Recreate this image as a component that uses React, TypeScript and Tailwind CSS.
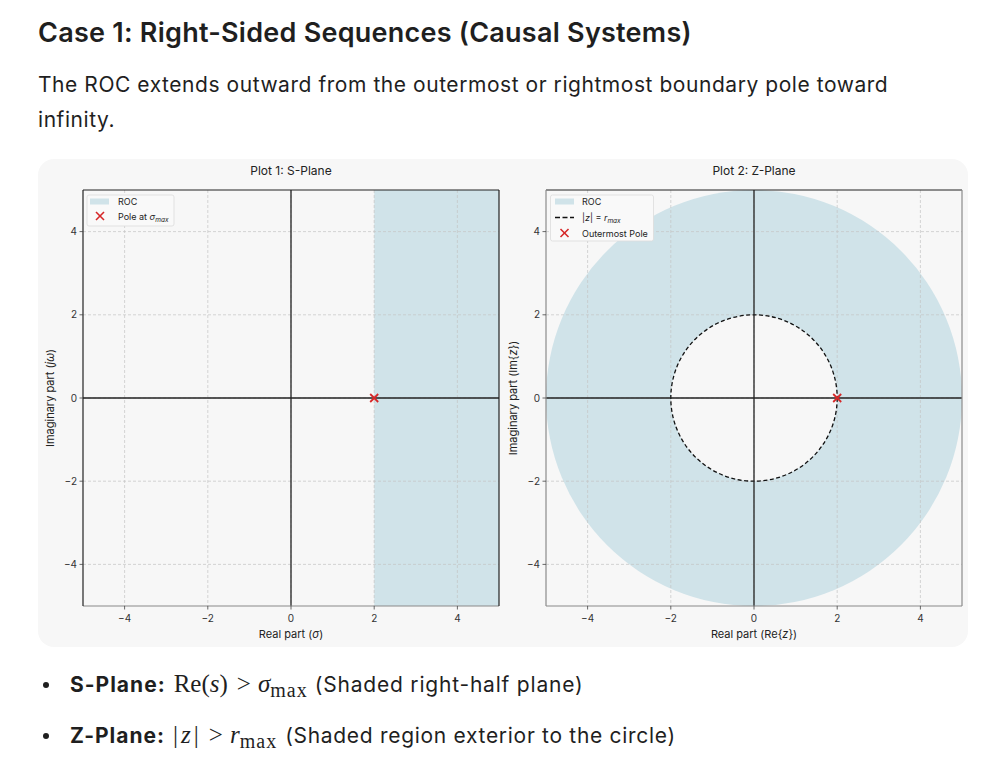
import React from "react";

const ROC = "#d0e3e9";
const FACE = "#f7f7f7";
const UNIT = 41.6;
const TICKS = [-4, -2, 0, 2, 4];

type PlotProps = {
  left: number
  title: string
  xlabel: React.ReactNode
  ylabel: React.ReactNode
  zPlane?: boolean
}

const fmt = (t: number) => (t < 0 ? "\u2212" + Math.abs(t) : String(t))

function Plot({ left, title, xlabel, ylabel, zPlane }: PlotProps) {
  const T = 31
  const W = 416
  const H = 416
  const x0 = left + W / 2
  const y0 = T + H / 2
  const px = (x: number) => x0 + x * UNIT
  const py = (y: number) => y0 - y * UNIT
  const clipId = zPlane ? "clipZ" : "clipS"

  return (
    <svg width="465" height="488" className="block shrink-0" style={{ fontFamily: "Inter, 'Liberation Sans', sans-serif" }}>
      <defs>
        <clipPath id={clipId}>
          <rect x={left} y={T} width={W} height={H} />
        </clipPath>
      </defs>

      <text x={x0} y={16} fontSize="12" textAnchor="middle" fill="#222">{title}</text>

      <g clipPath={`url(#${clipId})`}>
        <rect x={left} y={T} width={W} height={H} fill={FACE} />
        {zPlane ? (
          <>
            <circle cx={x0} cy={y0} r={5 * UNIT} fill={ROC} />
            <circle cx={x0} cy={y0} r={2 * UNIT} fill={FACE} />
          </>
        ) : (
          <rect x={px(2)} y={T} width={left + W - px(2)} height={H} fill={ROC} />
        )}
        {TICKS.map((t) => (
          <g key={t}>
            <line x1={px(t)} x2={px(t)} y1={T} y2={T + H} stroke="#c4c4c4" strokeWidth="0.7" strokeDasharray="3 2" />
            <line x1={left} x2={left + W} y1={py(t)} y2={py(t)} stroke="#c4c4c4" strokeWidth="0.7" strokeDasharray="3 2" />
          </g>
        ))}
        {zPlane && (
          <circle cx={x0} cy={y0} r={2 * UNIT} fill="none" stroke="#111" strokeWidth="1.3" strokeDasharray="4 2.5" />
        )}
        <line x1={left} x2={left + W} y1={y0} y2={y0} stroke="#222" strokeWidth="1.3" />
        <line x1={x0} x2={x0} y1={T} y2={T + H} stroke="#222" strokeWidth="1.3" />
        <g stroke="#d62728" strokeWidth="1.8">
          <line x1={px(2) - 4} x2={px(2) + 4} y1={y0 - 4} y2={y0 + 4} />
          <line x1={px(2) - 4} x2={px(2) + 4} y1={y0 + 4} y2={y0 - 4} />
        </g>
      </g>

      {/* spines */}
      <line x1={left} x2={left + W} y1={T} y2={T} stroke="#222" strokeWidth="1" />
      <line x1={left} x2={left + W} y1={T + H} y2={T + H} stroke="#8a8a8a" strokeWidth="1.2" />
      <line x1={left} x2={left} y1={T} y2={T + H} stroke={zPlane ? "#8a8a8a" : "#222"} strokeWidth="1.2" />
      <line x1={left + W} x2={left + W} y1={T} y2={T + H} stroke={zPlane ? "#8a8a8a" : "#222"} strokeWidth="1.2" />

      {/* ticks */}
      {TICKS.map((t) => (
        <g key={t} fontSize="10" fill="#333">
          <line x1={px(t)} x2={px(t)} y1={T + H} y2={T + H + 3.5} stroke="#444" strokeWidth="0.8" />
          <text x={px(t)} y={T + H + 16} textAnchor="middle">{fmt(t)}</text>
          <line x1={left - 3.5} x2={left} y1={py(t)} y2={py(t)} stroke="#444" strokeWidth="0.8" />
          <text x={left - 6} y={py(t) + 3.5} textAnchor="end">{fmt(t)}</text>
        </g>
      ))}

      <text x={x0} y={T + H + 32} fontSize="11" textAnchor="middle" fill="#222">{xlabel}</text>
      <text x={0} y={0} fontSize="11" textAnchor="middle" fill="#222" transform={`translate(${left - 29} ${y0}) rotate(-90)`}>{ylabel}</text>

      {/* legend */}
      {zPlane ? (
        <g fontSize="9" fill="#222">
          <rect x={left + 4.5} y={36} width={103} height={46} rx={2} fill="#f9f9f9" stroke="#dcdcdc" strokeWidth="0.8" />
          <rect x={left + 9} y={39.5} width={19} height={6} fill={ROC} />
          <text x={left + 36} y={46}>ROC</text>
          <line x1={left + 9} x2={left + 28} y1={58.5} y2={58.5} stroke="#111" strokeWidth="1.4" strokeDasharray="5 2.5" />
          <text x={left + 36} y={62}>|<tspan fontStyle="italic">z</tspan>| = <tspan fontStyle="italic">r</tspan><tspan fontSize="6.5" fontStyle="italic" dy="1.5">max</tspan></text>
          <g stroke="#d62728" strokeWidth="1.6">
            <line x1={left + 14.5} x2={left + 22.5} y1={70} y2={78} />
            <line x1={left + 14.5} x2={left + 22.5} y1={78} y2={70} />
          </g>
          <text x={left + 36} y={77.5}>Outermost Pole</text>
        </g>
      ) : (
        <g fontSize="9" fill="#222">
          <rect x={left + 4} y={36} width={87} height={31} rx={2} fill="#f9f9f9" stroke="#dcdcdc" strokeWidth="0.8" />
          <rect x={left + 7} y={39.5} width={19} height={6} fill={ROC} />
          <text x={left + 35} y={46}>ROC</text>
          <g stroke="#d62728" strokeWidth="1.6">
            <line x1={left + 13} x2={left + 21} y1={53} y2={61} />
            <line x1={left + 13} x2={left + 21} y1={61} y2={53} />
          </g>
          <text x={left + 35} y={61}>Pole at <tspan fontStyle="italic">σ</tspan><tspan fontSize="6.5" fontStyle="italic" dy="1.5">max</tspan></text>
        </g>
      )}
    </svg>
  )
}

export default function App() {
  return (
    <div className="min-h-screen bg-white px-[38px] pt-[17px] text-[#1f1f1f] font-['Inter','Liberation_Sans',sans-serif]">
      <h2 className="text-[27px] leading-[32px] font-semibold tracking-[0.25px]">Case 1: Right-Sided Sequences (Causal Systems)</h2>
      <p className="mt-[18px] w-[900px] text-[21px] leading-[35px] tracking-[0.55px]">
        The ROC extends outward from the outermost or rightmost boundary pole toward infinity.
      </p>

      <div className="mt-[22px] flex w-[930px] rounded-[16px] bg-[#f7f7f7] overflow-hidden">
        <Plot
          left={45}
          title="Plot 1: S-Plane"
          xlabel={<>Real part (<tspan fontStyle="italic">σ</tspan>)</>}
          ylabel={<>Imaginary part (<tspan fontStyle="italic">jω</tspan>)</>}
        />
        <Plot
          left={43}
          zPlane
          title="Plot 2: Z-Plane"
          xlabel={<>Real part (Re{"{"}<tspan fontStyle="italic">z</tspan>{"}"})</>}
          ylabel={<>Imaginary part (Im{"{"}<tspan fontStyle="italic">z</tspan>{"}"})</>}
        />
      </div>

      <ul className="mt-[22px] flex flex-col gap-[19px] text-[21px] leading-[32px]">
        <li className="flex items-center">
          <span className="ml-[5px] mr-[21px] h-[6px] w-[6px] shrink-0 rounded-full bg-[#1f1f1f]" />
          <span className="whitespace-nowrap">
            <b className="font-bold tracking-[1px]">S-Plane:</b>
            <span className="ml-[8px] font-['Liberation_Serif',serif] text-[25px] leading-none">
              Re(<i>s</i>)<span className="ml-[9px] mr-[7px]">&gt;</span><i>σ</i><sub className="text-[20px] leading-none tracking-[1px]">max</sub>
            </span>
            <span className="ml-[7px] tracking-[0.8px]">(Shaded right-half plane)</span>
          </span>
        </li>
        <li className="flex items-center">
          <span className="ml-[5px] mr-[21px] h-[6px] w-[6px] shrink-0 rounded-full bg-[#1f1f1f]" />
          <span className="whitespace-nowrap">
            <b className="font-bold tracking-[1px]">Z-Plane:</b>
            <span className="ml-[8px] font-['Liberation_Serif',serif] text-[25px] leading-none">
              |<i className="mx-[3px]">z</i>|<span className="ml-[10px] mr-[7px]">&gt;</span><i>r</i><sub className="text-[20px] leading-none tracking-[1px]">max</sub>
            </span>
            <span className="ml-[8px] tracking-[0.7px]">(Shaded region exterior to the circle)</span>
          </span>
        </li>
      </ul>
    </div>
  )
}
